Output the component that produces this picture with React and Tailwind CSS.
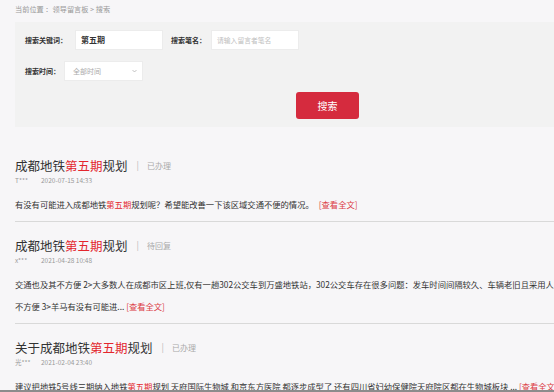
export default function App() {
  const red = "text-[#e3262d]";
  const items = [
    {
      pre: "成都地铁",
      post: "规划",
      status: "已办理",
      name: "T***",
      date: "2020-07-15 14:33",
      body: (
        <div className="leading-[22px] whitespace-nowrap overflow-hidden">
          有没有可能进入成都地铁<span className={red}>第五期</span>规划呢？希望能改善一下该区域交通不便的情况。
          <span className="ml-[5px] text-[#dc3a44]">[查看全文]</span>
        </div>
      ),
    },
    {
      pre: "成都地铁",
      post: "规划",
      status: "待回复",
      name: "x***",
      date: "2021-04-28 10:48",
      body: (
        <>
          <div className="leading-[22px] whitespace-nowrap overflow-hidden">
            交通也及其不方便 2&gt;大多数人在成都市区上班,仅有一趟302公交车到万盛地铁站，302公交车存在很多问题：发车时间间隔较久、车辆老旧且采用人工售票
          </div>
          <div className="leading-[22px] whitespace-nowrap overflow-hidden">
            不方便 3&gt;羊马有没有可能进... <span className="text-[#dc3a44]">[查看全文]</span>
          </div>
        </>
      ),
    },
    {
      pre: "关于成都地铁",
      post: "规划",
      status: "已办理",
      name: "光***",
      date: "2021-02-04 23:40",
      body: (
        <div className="leading-[22px] whitespace-nowrap overflow-hidden">
          建议把地铁5号线三期纳入地铁<span className={red}>第五期</span>规划 天府国际生物城 和京东方医院 都逐步成型了 还有四川省妇幼保健院天府院区都在生物城板块 ... <span className="text-[#dc3a44]">[查看全文]</span>
        </div>
      ),
    },
  ];

  return (
    <div className="relative h-[392px] w-[554px] overflow-hidden bg-[#f7f6f8] font-['Noto_Sans_CJK_SC','Microsoft_YaHei',sans-serif] text-[#333]">
      <div className="pl-[15px] pt-[4px] pb-[8px] text-[7.2px] leading-[10px] text-[#999]">
        当前位置 ：领导留言板 &gt; 搜索
      </div>

      <div className="ml-[15px] bg-[#f2f2f2] px-[10px] pt-[8px] pb-[8px]">
        <div className="flex h-[20px] items-center">
          <div className="w-[50px] text-[7px] font-bold text-[#333]">搜索关键词：</div>
          <div className="flex h-[20px] w-[88px] items-center border border-[#ececec] bg-white pl-[5px] text-[8px] font-bold text-[#333]">
            第五期
          </div>
          <div className="ml-[8px] w-[40px] text-[7px] font-bold text-[#333]">搜索笔名：</div>
          <div className="flex h-[20px] w-[88px] items-center border border-[#ececec] bg-white pl-[5px] text-[6.8px] text-[#c0c0c0]">
            请输入留言者笔名
          </div>
        </div>
        <div className="mt-[11px] flex h-[20px] items-center">
          <div className="w-[39px] text-[7px] font-bold text-[#333]">搜索时间：</div>
          <div className="flex h-[20px] w-[79px] items-center justify-between border border-[#ececec] bg-white pl-[8px] pr-[5px] text-[7px] text-[#aaa]">
            <span>全部时间</span>
            <svg width="5" height="4" viewBox="0 0 5 4" fill="none">
              <path d="M0.5 1l2 2 2-2" stroke="#aaa" strokeWidth="0.7" />
            </svg>
          </div>
        </div>
        <div className="mt-[11px] flex">
          <button className="ml-[271px] flex h-[27px] w-[63px] items-center justify-center rounded-[3px] bg-[#d52b3e] text-[10px] text-white">
            搜索
          </button>
        </div>
      </div>

      <div className="mt-[15px]">
        {items.map((it, i) => (
          <div key={i} className="ml-[15px] border-b border-[#d9d9d9] pt-[16px] pb-[6px]">
            <div className="flex h-[16px] items-center whitespace-nowrap">
              <span className="text-[12.5px] leading-[16px] text-[#333]">
                {it.pre}
                <span className={red}>第五期</span>
                {it.post}
              </span>
              <span className="ml-[9px] text-[9px] text-[#bbb]">|</span>
              <span className="ml-[8px] text-[8px] text-[#aaa]">{it.status}</span>
            </div>
            <div className="flex h-[12px] items-center text-[6.5px] leading-[12px] text-[#999]">
              <span className="w-[26px]">{it.name}</span>
              <span>{it.date}</span>
            </div>
            <div className="mt-[7px] text-[8.3px] text-[#333]">{it.body}</div>
          </div>
        ))}
      </div>

      <div className="absolute bottom-0 left-0 h-[2px] w-full bg-[#8c8c8c]" />
    </div>
  );
}
